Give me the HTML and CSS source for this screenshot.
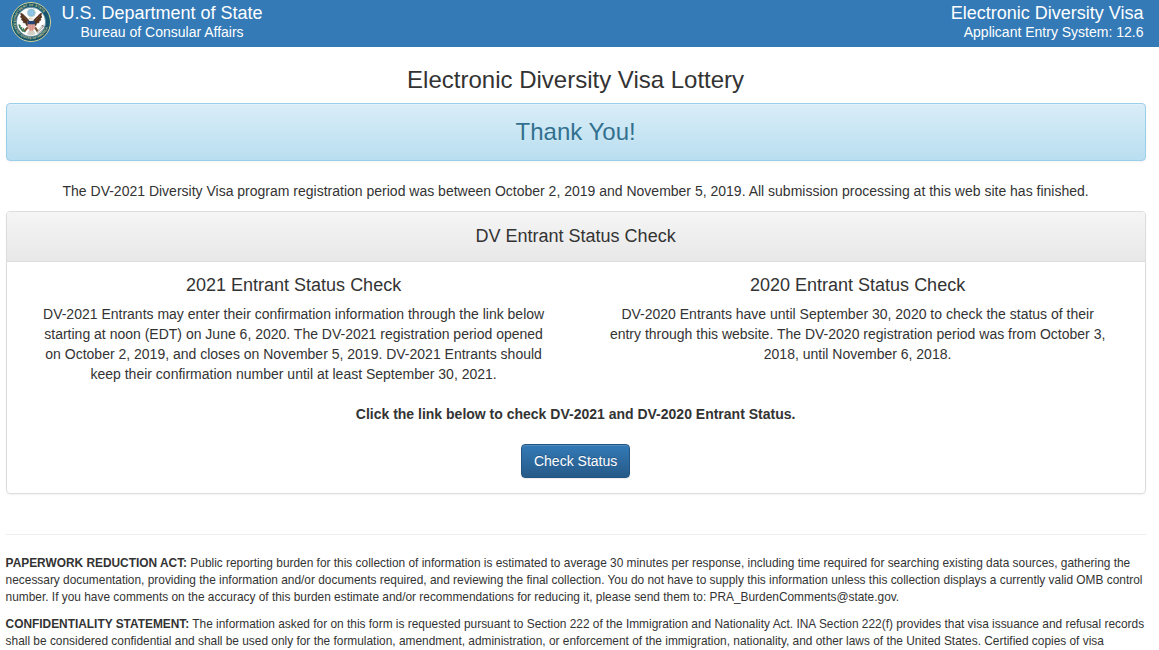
FILE: index.html
```html
<!DOCTYPE html>
<html lang="en">
<head>
    <meta charset="UTF-8">
    <meta name="viewport" content="width=device-width, initial-scale=1.0">
    <title>Electronic Diversity Visa Lottery</title>

    <link rel="stylesheet" href="styles.css">
</head>
<body>
    <header class="banner">
        <svg class="seal" viewBox="0 0 120 120" aria-label="Department of State seal">
            <defs>
                <path id="arcTop" d="M15 68 A46 46 0 1 1 105 68"/>
                <path id="arcBottom" d="M7 68 A54 54 0 0 0 113 68"/>
            </defs>
            <circle cx="60" cy="60" r="58.5" fill="#17566f" stroke="#d0d398" stroke-width="3"/>
            <g class="seal-text">
                <text><textPath href="#arcTop" textLength="126">DEPARTMENT OF STATE</textPath></text>
                <text><textPath href="#arcBottom" textLength="140">UNITED STATES OF AMERICA</textPath></text>
            </g>
            <circle cx="60" cy="60" r="44" fill="#fff" stroke="#3f748a" stroke-width="2"/>
            <!-- glory of stars -->
            <circle cx="61" cy="32" r="12" fill="#83bde0" stroke="#c3d3bd" stroke-width="2"/>
            <path d="M55 29h12M54 34h14M58 25v14M64 25v14" stroke="#a1cfea" stroke-width="1.5"/>
            <!-- wings -->
            <path d="M55 57 L48 49 L42 43 L34 35 L29 34 L31 42 L28 44 L33 50 L31 53 L37 57 L37 62 L44 63 L46 70 L54 75Z" fill="#55341f" stroke="#55341f" stroke-width="2"/>
            <path d="M66 57 L73 49 L80 43 L87 35 L92 34 L90 42 L93 45 L88 50 L90 54 L84 57 L84 62 L77 63 L75 70 L67 75Z" fill="#55341f" stroke="#55341f" stroke-width="2"/>
            <path d="M36 43 L48 56M86 43 L73 56" stroke="#7d5638" stroke-width="2"/>
            <!-- tail and legs -->
            <path d="M54 84 L48 96 L60 101 L74 96 L67 84Z" fill="#d5d1c6"/>
            <path d="M50 76 L41 87M72 76 L80 88" stroke="#76512f" stroke-width="6"/>
            <!-- head -->
            <path d="M55 58 L55 49 L60 44 L66 47 L67 58Z" fill="#e9e6df"/>
            <path d="M57 47 L52 49 L57 51Z" fill="#d2ad58"/>
            <!-- shield -->
            <path d="M50 58 H72 V74 Q70 84 61 88 Q52 84 50 74Z" fill="#e7b2a5"/>
            <path d="M54 67v15M59 67v19M64 67v19M69 67v15" stroke="#cd7a73" stroke-width="2"/>
            <path d="M50 57H72V67H50Z" fill="#294574"/>
            <!-- olive branch and arrows -->
            <path d="M24 67 Q26 83 43 90" fill="none" stroke="#397651" stroke-width="4"/>
            <path d="M23 68l4 9 3-7zM27 76l6 7 1-8zM33 82l8 4-2-9zM29 83l8 5-3 1z" fill="#397651"/>
            <path d="M78 94 L98 73M76 91 L94 72M80 96 L101 78" stroke="#7d7c76" stroke-width="2"/>
            <path d="M91 70l7-2-2 7zM97 74l6-3-2 8z" fill="#777b7b"/>
        </svg>
        <div class="banner-left">
            <div class="banner-title">U.S. Department of State</div>
            <div class="banner-sub">Bureau of Consular Affairs</div>
        </div>
        <div class="banner-right">
            <div class="banner-title">Electronic Diversity Visa</div>
            <div class="banner-sub">Applicant Entry System: 12.6</div>
        </div>
    </header>

    <main class="container">
        <h1>Electronic Diversity Visa Lottery</h1>
        <div class="alert">Thank You!</div>
        <p class="intro">The DV-2021 Diversity Visa program registration period was between October 2, 2019 and November 5, 2019. All submission processing at this web site has finished.</p>

        <section class="panel">
            <div class="panel-heading">
                <h2>DV Entrant Status Check</h2>
            </div>
            <div class="panel-body">
                <div class="row">
                    <div class="col">
                        <h3>2021 Entrant Status Check</h3>
                        <p>DV-2021 Entrants may enter their confirmation information through the link below starting at noon (EDT) on June 6, 2020. The DV-2021 registration period opened on October 2, 2019, and closes on November 5, 2019. DV-2021 Entrants should keep their confirmation number until at least September 30, 2021.</p>
                    </div>
                    <div class="col">
                        <h3>2020 Entrant Status Check</h3>
                        <p>DV-2020 Entrants have until September 30, 2020 to check the status of their entry through this website. The DV-2020 registration period was from October 3, 2018, until November 6, 2018.</p>
                    </div>
                </div>
                <p class="click-text"><strong>Click the link below to check DV-2021 and DV-2020 Entrant Status.</strong></p>
                <a class="btn" href="#">Check Status</a>
            </div>
        </section>

        <hr>

        <footer class="notes">
            <p><strong>PAPERWORK REDUCTION ACT:</strong> Public reporting burden for this collection of information is estimated to average 30 minutes per response, including time required for searching existing data sources, gathering the necessary documentation, providing the information and/or documents required, and reviewing the final collection. You do not have to supply this information unless this collection displays a currently valid OMB control number. If you have comments on the accuracy of this burden estimate and/or recommendations for reducing it, please send them to: PRA_BurdenComments@state.gov.</p>
            <p><strong>CONFIDENTIALITY STATEMENT:</strong> The information asked for on this form is requested pursuant to Section 222 of the Immigration and Nationality Act. INA Section 222(f) provides that visa issuance and refusal records shall be considered confidential and shall be used only for the formulation, amendment, administration, or enforcement of the immigration, nationality, and other laws of the United States. Certified copies of visa</p>
        </footer>
    </main>
</body>
</html>
```
FILE: styles.css
```css
* {
    box-sizing: border-box;
}

body {
    margin: 0;
    height: 650px;
    overflow: hidden;
    font-family: "Liberation Sans", Arial, sans-serif;
    font-size: 14px;
    line-height: 20px;
    color: #333;
    background-color: #fff;
}

h1, h2, h3 {
    margin: 0;
    font-weight: normal;
    line-height: 20px;
}

h1 {
    font-size: 24px;
    line-height: 26px;
    margin-bottom: 10px;
    text-align: center;
}

h2, h3 {
    font-size: 18px;
}

p {
    margin: 0 0 10px;
}

/* header */
.banner {
    display: flex;
    align-items: flex-start;
    height: 47px;
    padding: 2px 15.5px 0 11px;
    background-color: #337ab7;
    color: #fff;
}

.seal {
    width: 40px;
    height: 40px;
    margin-right: 10.5px;
}

.seal-text {
    fill: #c3c487;
    font-size: 10px;
    font-weight: bold;
}

.banner-left {
    text-align: center;
}

.banner-right {
    margin-left: auto;
    text-align: right;
}

.banner-title {
    font-size: 18px;
    line-height: 22px;
}

.banner-sub {
    line-height: 16px;
}

/* content */
.container {
    padding: 20px 13.4px 0 5.6px;
}

.alert {
    height: 58px;
    padding: 15px;
    margin-bottom: 20px;
    border: 1px solid #9acfea;
    border-radius: 4px;
    background-image: linear-gradient(#d9edf7, #b9def0);
    box-shadow: inset 0 1px 0 rgba(255, 255, 255, .25), 0 1px 2px rgba(0, 0, 0, .05);
    text-shadow: 0 1px 0 rgba(255, 255, 255, .2);
    color: #31708f;
    font-size: 24px;
    line-height: 26px;
    text-align: center;
}

.intro {
    text-align: center;
}

.panel {
    height: 283px;
    border: 1px solid #ddd;
    border-radius: 4px;
    box-shadow: 0 1px 2px rgba(0, 0, 0, .05);
    text-align: center;
}

.panel-heading {
    height: 50px;
    padding: 14px 15px;
    border-bottom: 1px solid #ddd;
    border-radius: 3px 3px 0 0;
    background-image: linear-gradient(#f5f5f5, #e8e8e8);
}

.panel-body {
    padding: 13px 5px 15px;
}

.row {
    display: flex;
}

.col {
    width: 50%;
    padding: 0 30px;
}

.col h3 {
    margin-bottom: 9px;
}

.click-text {
    margin: 10px 0 20px;
}

.btn {
    display: inline-block;
    padding: 6px 12px;
    border: 1px solid #245580;
    border-radius: 4px;
    background-image: linear-gradient(#337ab7, #265a88);
    box-shadow: inset 0 1px 0 rgba(255, 255, 255, .15), 0 1px 1px rgba(0, 0, 0, .075);
    text-shadow: 0 -1px 0 rgba(0, 0, 0, .2);
    color: #fff;
    text-decoration: none;
}

hr {
    margin: 40px 0 20px;
    border: 0;
    border-top: 1px solid #eee;
}

.notes {
    font-size: 11.9px;
    line-height: 17px;
}
```
